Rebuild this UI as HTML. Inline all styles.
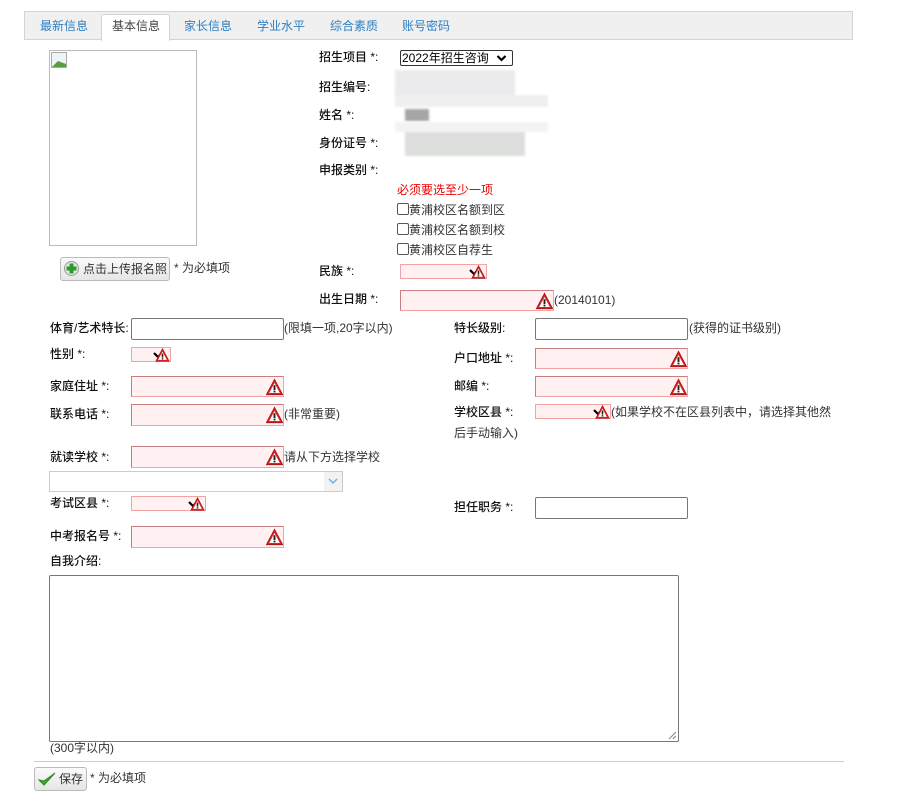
<!DOCTYPE html>
<html><head><meta charset="utf-8"><style>
body{margin:0;width:908px;height:790px;background:#fff;position:relative;overflow:hidden;font-family:"Liberation Sans","Noto Sans CJK SC",sans-serif;font-size:12px;color:#333}
.a{position:absolute;white-space:nowrap;line-height:14px}
.l{color:#111;font-weight:500}
.tab{position:absolute;top:19px;color:#2f7fc1;font-size:12px;line-height:14px}
.in{position:absolute;box-sizing:border-box;border:1px solid #777;border-radius:2px;background:#fff}
.er{position:absolute;box-sizing:border-box;border:1px solid #f3a3a3;border-top-color:#c87e7e;border-left-color:#c87e7e;background:#fff1f1}
.er svg,.sel svg{position:absolute;right:0;top:50%;transform:translateY(-50%)}
.sel{position:absolute;box-sizing:border-box;border:1px solid #f3a3a3;background:#fff1f1}
.blur{position:absolute;background:#e6e6e6;filter:blur(1px)}
</style></head><body>
<svg width="0" height="0" style="position:absolute"><defs>
<symbol id="w" viewBox="0 0 16 16"><path d="M8 0.8 L15.6 15.2 L0.4 15.2 Z" fill="#d22" stroke="#a11" stroke-width="0.8"/><path d="M8 4.2 L13 13.6 L3 13.6 Z" fill="#fff"/><rect x="7.1" y="6.3" width="1.8" height="4.7" fill="#222"/><rect x="7.1" y="11.6" width="1.8" height="1.5" fill="#222"/></symbol>
<symbol id="c" viewBox="0 0 10 8"><path d="M1 2 L5 6 L9 2" fill="none" stroke="#000" stroke-width="2.2"/></symbol>
</defs></svg>

<div style="position:absolute;left:24px;top:11px;width:829px;height:29px;box-sizing:border-box;background:#f0f0f0;border:1px solid #d4d4d4"></div>
<div style="position:absolute;left:101px;top:14px;width:69px;height:27px;box-sizing:border-box;background:#fff;border:1px solid #d4d4d4;border-bottom:none;border-radius:3px 3px 0 0"></div>
<div class="tab" style="left:40px">最新信息</div>
<div class="tab" style="left:112px;color:#444">基本信息</div>
<div class="tab" style="left:184px">家长信息</div>
<div class="tab" style="left:257px">学业水平</div>
<div class="tab" style="left:330px">综合素质</div>
<div class="tab" style="left:402px">账号密码</div>

<div style="position:absolute;left:49px;top:50px;width:148px;height:196px;box-sizing:border-box;border:1px solid #bbb"></div>
<svg style="position:absolute;left:51px;top:52px" width="16" height="16"><rect x="0.5" y="0.5" width="15" height="15" fill="#eef3f7" stroke="#aaa"/><path d="M1 15 L7 9 L15 12 L15 15Z" fill="#5a9d3e"/></svg>
<div style="position:absolute;left:60px;top:257px;width:110px;height:24px;box-sizing:border-box;border:1px solid #bbb;border-radius:3px;background:linear-gradient(#fafafa,#e6e6e6)"></div>
<svg style="position:absolute;left:64px;top:261px" width="15" height="15"><circle cx="7.5" cy="7.5" r="7" fill="#dfe9da" stroke="#999"/><path d="M5.5 2.5h4v3h3v4h-3v3h-4v-3h-3v-4h3z" fill="#2d9a2d"/></svg>
<div class="a" style="left:83px;top:262px">点击上传报名照</div>
<div class="a" style="left:174px;top:261px">* 为必填项</div>

<div class="a l" style="left:319px;top:50px">招生项目 *:</div>
<div style="position:absolute;left:400px;top:50px;width:113px;height:16px;box-sizing:border-box;border:1px solid #333;border-radius:2px;background:#fff"></div>
<div class="a" style="left:402px;top:51px;color:#000">2022年招生咨询</div>
<svg style="position:absolute;left:496px;top:54px" width="11" height="8"><use href="#c"/></svg>
<div class="a l" style="left:319px;top:80px">招生编号:</div>
<div class="a l" style="left:319px;top:108px">姓名 *:</div>
<div class="a l" style="left:319px;top:136px">身份证号 *:</div>
<div class="a l" style="left:319px;top:163px">申报类别 *:</div>
<div class="blur" style="left:395px;top:70px;width:120px;height:27px;background:#ebebed"></div>
<div class="blur" style="left:395px;top:95px;width:153px;height:12px;background:#efefef"></div>
<div class="blur" style="left:405px;top:109px;width:24px;height:12px;background:#a6a6a8"></div>
<div class="blur" style="left:395px;top:122px;width:153px;height:10px;background:#f3f3f3"></div>
<div class="blur" style="left:405px;top:132px;width:120px;height:24px;background:#dcdedc"></div>

<div class="a" style="left:397px;top:183px;color:#e00">必须要选至少一项</div>
<div class="a" style="left:397px;top:203px"><span style="display:inline-block;width:10px;height:10px;border:1px solid #555;border-radius:2px;vertical-align:-1px"></span>黄浦校区名额到区</div>
<div class="a" style="left:397px;top:223px"><span style="display:inline-block;width:10px;height:10px;border:1px solid #555;border-radius:2px;vertical-align:-1px"></span>黄浦校区名额到校</div>
<div class="a" style="left:397px;top:243px"><span style="display:inline-block;width:10px;height:10px;border:1px solid #555;border-radius:2px;vertical-align:-1px"></span>黄浦校区自荐生</div>

<div class="a l" style="left:319px;top:264px">民族 *:</div>
<div class="sel" style="left:400px;top:264px;width:87px;height:15px"><svg style="right:7px" width="10" height="8"><use href="#c"/></svg><svg width="15" height="14"><use href="#w"/></svg></div>
<div class="a l" style="left:319px;top:292px">出生日期 *:</div>
<div class="er" style="left:400px;top:290px;width:154px;height:21px"><svg width="17" height="17"><use href="#w"/></svg></div>
<div class="a" style="left:554px;top:293px">(20140101)</div>

<div class="a l" style="left:50px;top:321px">体育/艺术特长:</div>
<div class="in" style="left:131px;top:318px;width:153px;height:22px"></div>
<div class="a" style="left:284px;top:321px">(限填一项,20字以内)</div>
<div class="a l" style="left:50px;top:347px">性别 *:</div>
<div class="sel" style="left:131px;top:347px;width:40px;height:15px"><svg style="right:7px" width="10" height="8"><use href="#c"/></svg><svg width="15" height="14"><use href="#w"/></svg></div>
<div class="a l" style="left:50px;top:379px">家庭住址 *:</div>
<div class="er" style="left:131px;top:376px;width:153px;height:21px"><svg width="17" height="17"><use href="#w"/></svg></div>
<div class="a l" style="left:50px;top:407px">联系电话 *:</div>
<div class="er" style="left:131px;top:404px;width:153px;height:22px"><svg width="17" height="17"><use href="#w"/></svg></div>
<div class="a" style="left:284px;top:407px">(非常重要)</div>
<div class="a l" style="left:50px;top:450px">就读学校 *:</div>
<div class="er" style="left:131px;top:446px;width:153px;height:22px"><svg width="17" height="17"><use href="#w"/></svg></div>
<div class="a" style="left:284px;top:450px">请从下方选择学校</div>
<div style="position:absolute;left:49px;top:471px;width:294px;height:21px;box-sizing:border-box;border:1px solid #ccc;background:#fff"></div>
<div style="position:absolute;left:324px;top:472px;width:18px;height:19px;background:#f2f2f2"></div>
<svg style="position:absolute;left:328px;top:478px" width="10" height="7"><path d="M1 1 L5 5 L9 1" fill="none" stroke="#6ab0e6" stroke-width="1.5"/></svg>
<div class="a l" style="left:50px;top:496px">考试区县 *:</div>
<div class="sel" style="left:131px;top:496px;width:75px;height:15px"><svg style="right:7px" width="10" height="8"><use href="#c"/></svg><svg width="15" height="14"><use href="#w"/></svg></div>
<div class="a l" style="left:50px;top:529px">中考报名号 *:</div>
<div class="er" style="left:131px;top:526px;width:153px;height:22px"><svg width="17" height="17"><use href="#w"/></svg></div>
<div class="a l" style="left:50px;top:554px">自我介绍:</div>
<div style="position:absolute;left:49px;top:575px;width:630px;height:167px;box-sizing:border-box;border:1px solid #777;border-radius:2px"></div>
<svg style="position:absolute;left:668px;top:731px" width="9" height="9"><path d="M8 1 L1 8 M8 5 L5 8" stroke="#888"/></svg>
<div class="a" style="left:50px;top:741px">(300字以内)</div>

<div class="a l" style="left:454px;top:321px">特长级别:</div>
<div class="in" style="left:535px;top:318px;width:153px;height:22px"></div>
<div class="a" style="left:689px;top:321px">(获得的证书级别)</div>
<div class="a l" style="left:454px;top:351px">户口地址 *:</div>
<div class="er" style="left:535px;top:348px;width:153px;height:21px"><svg width="17" height="17"><use href="#w"/></svg></div>
<div class="a l" style="left:454px;top:379px">邮编 *:</div>
<div class="er" style="left:535px;top:376px;width:153px;height:21px"><svg width="17" height="17"><use href="#w"/></svg></div>
<div class="a l" style="left:454px;top:405px">学校区县 *:</div>
<div class="sel" style="left:535px;top:404px;width:76px;height:15px"><svg style="right:7px" width="10" height="8"><use href="#c"/></svg><svg width="15" height="14"><use href="#w"/></svg></div>
<div class="a" style="left:611px;top:405px">(如果学校不在区县列表中，请选择其他然</div>
<div class="a" style="left:454px;top:426px">后手动输入)</div>
<div class="a l" style="left:454px;top:500px">担任职务 *:</div>
<div class="in" style="left:535px;top:497px;width:153px;height:22px"></div>

<div style="position:absolute;left:34px;top:761px;width:810px;height:1px;background:#ccc"></div>
<div style="position:absolute;left:34px;top:767px;width:53px;height:24px;box-sizing:border-box;border:1px solid #bbb;border-radius:3px;background:linear-gradient(#fafafa,#e6e6e6)"></div>
<svg style="position:absolute;left:38px;top:771px" width="18" height="16"><path d="M1 9 L6 14 L17 2 L6 10 Z" fill="#3faa2e" stroke="#2b8a20" stroke-width="1"/></svg>
<div class="a" style="left:59px;top:772px">保存</div>
<div class="a" style="left:90px;top:771px">* 为必填项</div>
</body></html>
